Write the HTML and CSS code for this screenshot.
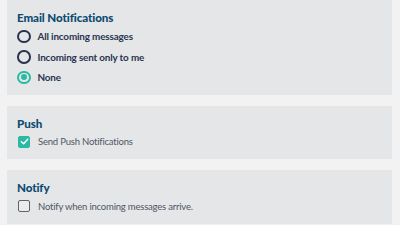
FILE: index.html
```html
<!DOCTYPE html>
<html lang="en">
<head>
<meta charset="UTF-8" />
<title>Notification settings</title>
<link rel="stylesheet" href="styles.css">
</head>
<body>

<div class="panel">
  <h2>Email Notifications</h2>
  <label class="radio-row"><span class="radio"></span>All incoming messages</label>
  <label class="radio-row"><span class="radio"></span>Incoming sent only to me</label>
  <label class="radio-row"><span class="radio on"></span>None</label>
</div>

<div class="panel">
  <h2>Push</h2>
  <label class="check-row">
    <span class="check on">
      <svg width="9" height="9" viewBox="0 0 10 10"><path d="M1.5 5.2 L4 7.5 L8.6 2.5" fill="none" stroke="#fff" stroke-width="1.6" stroke-linecap="round" stroke-linejoin="round"/></svg>
    </span>
    Send Push Notifications
  </label>
</div>

<div class="panel">
  <h2>Notify</h2>
  <label class="check-row"><span class="check"></span>Notify when incoming messages arrive.</label>
</div>

</body>
</html>
```

FILE: styles.css
```css
body {
  margin: 0 8px 0 7px;
  font-family: Lato, "Noto Sans", sans-serif;
  background-color: #f2f2f2;
}
.panel {
  background: #e5e6e8;
  padding: 9px 10px 7px;
  margin-bottom: 11px;
}
.panel h2 {
  margin: 0;
  font-size: 11.6px;
  line-height: 17px;
  font-weight: 900;
  letter-spacing: -0.1px;
  color: #0d4b70;
}
.radio-row, .check-row {
  display: flex;
  align-items: center;
  height: 20.5px;
}
.radio-row {
  color: #28354f;
  font-size: 9.9px;
  font-weight: bold;
  letter-spacing: -0.15px;
}
.check-row {
  color: #4f5663;
  font-size: 9.5px;
  letter-spacing: -0.2px;
}
.radio {
  width: 9.5px;
  height: 9.5px;
  border: 2px solid #28334d;
  border-radius: 50%;
  margin: 0 7px 0 0;
  position: relative;
}
.radio.on {
  border-color: #2bb9a4;
}
.radio.on::after {
  content: "";
  position: absolute;
  top: 1.75px;
  left: 1.75px;
  width: 6px;
  height: 6px;
  border-radius: 50%;
  background: #2bb9a4;
}
.check {
  width: 10px;
  height: 10px;
  border: 1.4px solid #606369;
  border-radius: 2px;
  background: #eaebec;
  margin: 0 8px 0 1px;
  display: flex;
  align-items: center;
  justify-content: center;
}
.check.on {
  background: #2bb9a4;
  border-color: #2bb9a4;
}
```
